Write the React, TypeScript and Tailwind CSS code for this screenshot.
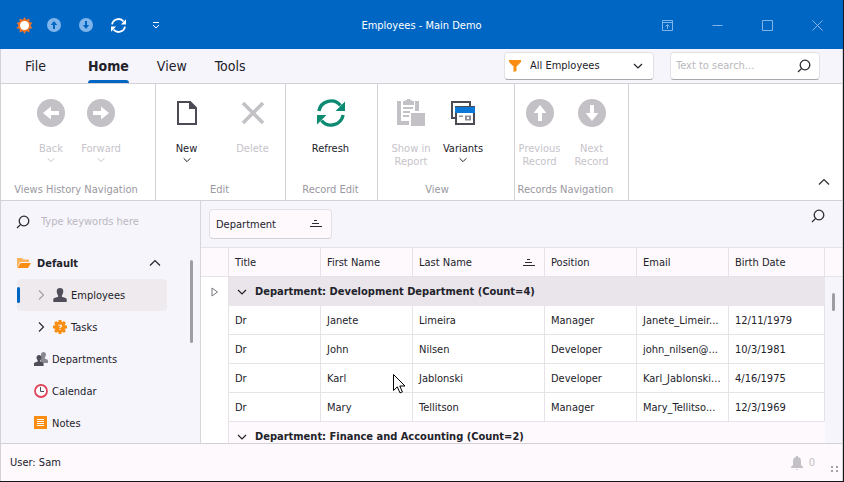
import type { ReactNode } from "react";

function Chevron({ dir, size = 12, className = "" }: { dir: "up" | "down" | "right"; size?: number; className?: string }) {
  const d = dir === "up" ? "M1 8.5 6 3.5l5 5" : dir === "down" ? "M2 4l4 4 4-4" : "M4 1.5 8.5 6 4 10.5";
  return (
    <svg width={size} height={size} viewBox="0 0 12 12" fill="none" stroke="currentColor" strokeWidth="1.2" className={className} aria-hidden="true">
      <path d={d} />
    </svg>
  );
}

function SearchIcon() {
  return (
    <svg width="14" height="14" viewBox="0 0 14 14" fill="none" stroke="#2b2b33" strokeWidth="1.3" aria-hidden="true">
      <circle cx="8" cy="6" r="4.8" />
      <path d="M4.7 9.4 1 13" />
    </svg>
  );
}

function SortIcon() {
  return (
    <svg width="12" height="8" viewBox="0 0 12 8" stroke="#2b2b33" strokeWidth="1" aria-hidden="true">
      <path d="M4 .5h3M2 3.5h7M0 6.5h12" />
    </svg>
  );
}

function ArrowDisc({ rotate, size, disc, arrow }: { rotate: 0 | 90 | 180 | 270; size: number; disc: string; arrow: string }) {
  return (
    <svg width={size} height={size} viewBox="0 0 28 28" aria-hidden="true">
      <circle cx="14" cy="14" r="14" fill={disc} />
      <path transform={`rotate(${rotate} 14 14)`} d="M14 6l6.4 8h-4.400v8h-4v-8H7.600z" fill={arrow} />
    </svg>
  );
}

function RefreshIcon({ size, color }: { size: number; color: string }) {
  return (
    <svg width={size} height={size} viewBox="0 0 28 28" aria-hidden="true">
      <g fill="none" stroke={color} strokeWidth="3.4">
        <path d="M1.900 12A12.300 12.300 0 0 1 23.500 6.500" />
        <path d="M26.100 16A12.300 12.300 0 0 1 4.500 21.500" />
      </g>
      <path d="M28 2.500v9.500H18.500zM0 25.500V16h9.500z" fill={color} />
    </svg>
  );
}

function SunIcon() {
  const rays = Array.from({ length: 10 }, (_, i) => i * 36);
  return (
    <svg width="17" height="17" viewBox="0 0 18 18" aria-hidden="true">
      {rays.map((a) => (
        <path key={a} d="M9 0l3 5H6z" fill="#f07427" transform={`rotate(${a} 9 9)`} />
      ))}
      <circle cx="9" cy="9" r="6.200" fill="#f07427" />
      <circle cx="9" cy="9" r="4.800" fill="#fff" />
    </svg>
  );
}

function NewIcon() {
  return (
    <svg width="28" height="28" viewBox="0 0 28 28" aria-hidden="true">
      <path d="M5 3h11.500l6.500 6.500V25H5z" fill="none" stroke="#4c4b55" strokeWidth="2" />
      <path d="M16 2h1.500L24 8.500V10h-8z" fill="#4c4b55" />
    </svg>
  );
}

function DeleteIcon() {
  return (
    <svg width="28" height="28" viewBox="0 0 28 28" stroke="#c3c0c6" strokeWidth="3.6" aria-hidden="true">
      <path d="M4 4l20 20M24 4 4 24" />
    </svg>
  );
}

function ReportIcon() {
  return (
    <svg width="28" height="28" viewBox="0 0 28 28" fill="#c3c0c6" aria-hidden="true">
      <path d="M0 2h4v20h8v4H0zM18 2h4v10h-4zM6 2h2.500V1H10V0h3v1h1.500v1H17v4H6z" />
      <path d="M6 8h10v2H6zM6 12h7v2H6zM6 16h6v2H6zM14 14h14v13H14z" />
    </svg>
  );
}

function VariantsIcon() {
  return (
    <svg width="28" height="28" viewBox="0 0 28 28" aria-hidden="true">
      <path d="M6 19H3V3h18v5" fill="none" stroke="#4c4b55" strokeWidth="2" />
      <path d="M7 8h18v17H7z" fill="#fff" stroke="#4c4b55" strokeWidth="2" />
      <path d="M6 8h20v6H6z" fill="#0a78d6" />
      <path d="M10 16.500h4v1.500h-4zM16 16.500h6v5h-6z" fill="#8f8e97" />
      <path d="M18 18h2v2h-2z" fill="#fff" />
    </svg>
  );
}

const label = "text-[11px] leading-[13px]";

function RibbonButton({ icon, text, enabled, menu, width }: { icon: ReactNode; text: string; enabled?: boolean; menu?: boolean; width: string }) {
  return (
    <button
      type="button"
      disabled={!enabled}
      className={`${width} ${label} flex shrink-0 flex-col items-center pt-[15px] text-center ${enabled ? "text-[#22222a]" : "text-[#c6c3ca]"}`}
    >
      <span className="mb-[15px] flex h-7">{icon}</span>
      <span>{text}</span>
      {menu && <Chevron dir="down" size={10} />}
    </button>
  );
}

function RibbonGroup({ title, width, children }: { title: string; width: string; children: ReactNode }) {
  return (
    <section aria-label={title} className={`${width} flex shrink-0 flex-col border-r border-[#d3d0d6]`}>
      <div className="flex flex-1 justify-center">{children}</div>
      <h2 className={`${label} pb-1 text-center whitespace-nowrap text-[#9a989f]`}>{title}</h2>
    </section>
  );
}

function Ribbon() {
  const disc = "#c3c0c6";
  return (
    <div className="flex h-[118px] shrink-0 border-y border-[#d3d0d6] bg-white">
      <RibbonGroup title="Views History Navigation" width="w-[155px] pr-1">
        <RibbonButton width="w-[50px]" icon={<ArrowDisc size={28} rotate={270} disc={disc} arrow="#fff" />} text="Back" menu />
        <RibbonButton width="w-[50px]" icon={<ArrowDisc size={28} rotate={90} disc={disc} arrow="#fff" />} text="Forward" menu />
      </RibbonGroup>
      <RibbonGroup title="Edit" width="w-[130px] pr-0.5">
        <RibbonButton width="w-[66px]" icon={<NewIcon />} text="New" enabled menu />
        <div className="mt-1.5 mb-2.5 w-px bg-[#d3d0d6]" />
        <RibbonButton width="w-[66px]" icon={<DeleteIcon />} text="Delete" />
      </RibbonGroup>
      <RibbonGroup title="Record Edit" width="w-[92px] pr-0.5">
        <RibbonButton width="w-[66px]" icon={<RefreshIcon size={28} color="#0d8a72" />} text="Refresh" enabled />
      </RibbonGroup>
      <RibbonGroup title="View" width="w-[137px] pr-[18px]">
        <RibbonButton width="w-[52px]" icon={<ReportIcon />} text="Show in Report" />
        <RibbonButton width="w-[52px]" icon={<VariantsIcon />} text="Variants" enabled menu />
      </RibbonGroup>
      <RibbonGroup title="Records Navigation" width="w-[114px] pr-3">
        <RibbonButton width="w-[52px]" icon={<ArrowDisc size={28} rotate={0} disc={disc} arrow="#fff" />} text="Previous Record" />
        <RibbonButton width="w-[52px]" icon={<ArrowDisc size={28} rotate={180} disc={disc} arrow="#fff" />} text="Next Record" />
      </RibbonGroup>
      <button type="button" aria-label="Collapse ribbon" className="mt-auto mr-3 mb-3 ml-auto text-[#2b2b33]">
        <Chevron dir="up" />
      </button>
    </div>
  );
}

function TitleBar() {
  return (
    <header className="grid h-[49px] shrink-0 grid-cols-[1fr_auto_1fr] items-center bg-[#0066c4] pt-px text-[#7fb5ea]">
      <div className="flex items-center pl-4">
        <SunIcon />
        <div className="ml-3.5 flex items-center gap-[18px]">
          <button type="button" aria-label="Previous">
            <ArrowDisc size={14} rotate={0} disc="#7fb5ea" arrow="#0066c4" />
          </button>
          <button type="button" aria-label="Next">
            <ArrowDisc size={14} rotate={180} disc="#7fb5ea" arrow="#0066c4" />
          </button>
          <button type="button" aria-label="Refresh">
            <RefreshIcon size={15} color="#fff" />
          </button>
          <button type="button" aria-label="Customize toolbar" className="ml-2">
            <svg width="8" height="8" viewBox="0 0 8 8" fill="none" stroke="#fff">
              <path d="M1 1.500h6M1 4l3 3 3-3" />
            </svg>
          </button>
        </div>
      </div>
      <h1 className="pt-0.5 text-[11px] text-white">Employees - Main Demo</h1>
      <div className="flex items-center justify-end gap-[39px] pr-5">
        <button type="button" aria-label="Ribbon display options">
          <svg width="11" height="11" viewBox="0 0 11 11" fill="none" stroke="currentColor">
            <path d="M.5.500h10v10H.5zM.5 2.500h10M5.500 9V5M3.500 6.500l2-2 2 2" />
          </svg>
        </button>
        <button type="button" aria-label="Minimize">
          <svg width="11" height="11" viewBox="0 0 11 11" stroke="currentColor">
            <path d="M.5 5.500h10" />
          </svg>
        </button>
        <button type="button" aria-label="Maximize">
          <svg width="11" height="11" viewBox="0 0 11 11" fill="none" stroke="currentColor">
            <path d="M.5.500h10v10H.5z" />
          </svg>
        </button>
        <button type="button" aria-label="Close">
          <svg width="11" height="11" viewBox="0 0 11 11" stroke="currentColor">
            <path d="M.5.500l10 10M10.500.500l-10 10" />
          </svg>
        </button>
      </div>
    </header>
  );
}

const field = "flex h-7 w-[150px] items-center rounded border border-[#e4e1e6] border-b-[#a9a7ad] bg-white";

function TabBar() {
  return (
    <div className="flex h-[34px] shrink-0 items-center pr-[22px]">
      <nav className="flex h-full flex-1 text-sm">
        <button type="button" className="ml-6">File</button>
        <button type="button" className="relative ml-[42px] font-bold">
          Home
          <span className="absolute right-0 bottom-0 left-0 h-[3px] rounded-t-sm bg-[#0066c4]" />
        </button>
        <button type="button" className="ml-7">View</button>
        <button type="button" className="ml-7">Tools</button>
      </nav>
      <div className={`${field} relative`}>
        <svg width="12" height="12" viewBox="0 0 12 12" fill="#f98e13" className="absolute left-1" aria-hidden="true">
          <path d="M0 0h12v2L7.500 6.500V11l-3 1V6.500L0 2z" />
        </svg>
        <select aria-label="Filter" className="h-full w-full appearance-none bg-transparent pl-[25px] text-[11px] outline-none">
          <option>All Employees</option>
        </select>
        <Chevron dir="down" className="pointer-events-none absolute right-[9px]" />
      </div>
      <div className={`${field} ml-4 pr-2`}>
        <input
          type="search"
          aria-label="Text to search"
          placeholder="Text to search..."
          className="min-w-0 flex-1 bg-transparent pl-[5px] text-[11px] outline-none placeholder:text-[#bab8be]"
        />
        <SearchIcon />
      </div>
    </div>
  );
}

function FolderIcon() {
  return (
    <svg width="14" height="12" viewBox="0 0 14 12" aria-hidden="true">
      <path d="M0 1h5l1.500 1.500H12V5H3L0 11z" fill="#fbb258" />
      <path d="M3.500 6H14l-3 5H.500z" fill="#f98e13" />
    </svg>
  );
}

function PersonIcon() {
  return (
    <svg width="14" height="14" viewBox="0 0 14 14" fill="#504f59" aria-hidden="true">
      <path d="M7 0c2 0 3.300 1.200 3.300 3.200S9 7.500 8.800 7.700v1l3.800 1.300c.8.300 1.100.8 1.100 1.600V14H.3v-2.400c0-.8.300-1.300 1.100-1.600l3.800-1.300v-1C5 7.500 3.700 5.200 3.700 3.200S5 0 7 0z" />
    </svg>
  );
}

function PeopleIcon() {
  return (
    <svg width="14" height="14" viewBox="0 0 14 14" aria-hidden="true">
      <path d="M9.500 0c1.500 0 2.500 1 2.500 2.400 0 1.500-1 3-1.200 3.200v1l2.400 1c.5.200.8.600.8 1.200V11H7V2c.3-1.200 1.300-2 2.500-2z" fill="#8a8992" />
      <path d="M5 3c1.500 0 2.500 1 2.500 2.400 0 1.500-1 2.900-1.200 3.100v1l2.500 1c.5.200.8.600.8 1.200V14H0v-2.300c0-.6.300-1 .8-1.200l2.900-1v-1C3.500 8.300 2.500 6.900 2.500 5.400 2.500 4 3.500 3 5 3z" fill="#504f59" />
    </svg>
  );
}

function TaskIcon() {
  return (
    <svg width="14" height="14" viewBox="0 0 14 14" aria-hidden="true">
      <g fill="#f98e13">
        {[0, 45, 90, 135].map((a) => (
          <rect key={a} x="5.500" y="0" width="3" height="14" transform={`rotate(${a} 7 7)`} />
        ))}
        <circle cx="7" cy="7" r="5.500" />
      </g>
      <path d="M5.500 5.200h3v1.600H7v1.400M7 9v1" fill="none" stroke="#fff" />
    </svg>
  );
}

function ClockIcon() {
  return (
    <svg width="14" height="14" viewBox="0 0 14 14" fill="none" aria-hidden="true">
      <circle cx="7" cy="7" r="6" fill="#fff" stroke="#e0455b" strokeWidth="1.800" />
      <path d="M6.500 3v4.500H10" stroke="#504f59" />
    </svg>
  );
}

function NotesIcon() {
  return (
    <svg width="14" height="14" viewBox="0 0 14 14" aria-hidden="true">
      <rect width="13" height="13" fill="#f98e13" />
      <path d="M3 3.500h7M3 5.500h7M3 7.500h7M3 9.500h7" stroke="#fff" />
    </svg>
  );
}

function NavItem({ icon, text, expand, selected }: { icon: ReactNode; text: string; expand?: "dim" | "on"; selected?: boolean }) {
  return (
    <li>
      <button
        type="button"
        className={`relative flex h-8 w-[150px] items-center rounded text-[11px] ${expand ? "pl-[18px]" : "pl-[17px]"} ${selected ? "bg-[#eeeaed]" : ""}`}
      >
        {selected && <span className="absolute top-2 left-0 h-4 w-[3px] rounded-sm bg-[#0066c4]" />}
        {expand && <Chevron dir="right" className={expand === "dim" ? "mr-1.5 text-[#a5a3aa]" : "mr-1.5 text-[#2b2b33]"} />}
        <span className="mr-1">{icon}</span>
        <span className="pt-0.5">{text}</span>
      </button>
    </li>
  );
}

function Sidebar() {
  return (
    <aside className="flex w-[200px] shrink-0 flex-col border-r border-[#d8d5db]">
      <div className="flex items-center gap-[11px] pt-[13px] pl-[15px]">
        <SearchIcon />
        <input
          type="search"
          aria-label="Type keywords here"
          placeholder="Type keywords here"
          className="h-4 w-36 bg-transparent text-[11px] outline-none placeholder:text-[#bab8be]"
        />
      </div>
      <div className="mt-[17px] flex min-h-0 flex-1 overflow-hidden">
        <div className="flex-1 pl-4">
          <div className="flex h-8 w-[150px] items-center">
            <FolderIcon />
            <span className="ml-[6px] flex-1 pt-0.5 text-[11px] font-bold">Default</span>
            <button type="button" aria-label="Collapse Default" className="mr-1.5">
              <Chevron dir="up" />
            </button>
          </div>
          <ul>
            <NavItem icon={<PersonIcon />} text="Employees" expand="dim" selected />
            <NavItem icon={<TaskIcon />} text="Tasks" expand="on" />
            <NavItem icon={<PeopleIcon />} text="Departments" />
            <NavItem icon={<ClockIcon />} text="Calendar" />
            <NavItem icon={<NotesIcon />} text="Notes" />
          </ul>
        </div>
        <div className="mt-[13px] mr-[7px] h-[83px] w-[3px] rounded bg-[#9f9da3]" />
      </div>
    </aside>
  );
}

const rows = [
  ["Dr", "Janete", "Limeira", "Manager", "Janete_Limeir...", "12/11/1979"],
  ["Dr", "John", "Nilsen", "Developer", "john_nilsen@...", "10/3/1981"],
  ["Dr", "Karl", "Jablonski", "Developer", "Karl_Jablonski...", "4/16/1975"],
  ["Dr", "Mary", "Tellitson", "Manager", "Mary_Tellitso...", "12/3/1969"],
];

function GroupRow({ text, active }: { text: string; active?: boolean }) {
  return (
    <tr className="h-[29px]">
      <td className="border-r border-[#e6e2e8] bg-white">
        {active && (
          <svg width="8" height="10" viewBox="0 0 8 10" fill="none" stroke="#77757d" className="mx-auto" aria-hidden="true">
            <path d="M1 1v8l5.500-4z" />
          </svg>
        )}
      </td>
      <th colSpan={6} scope="rowgroup" className={`text-left ${active ? "bg-[#e9e5ea]" : "bg-[#fdf9fc]"}`}>
        <button type="button" className="flex items-center gap-[7px] pl-[7px] font-bold">
          <Chevron dir="down" />
          {text}
        </button>
      </th>
    </tr>
  );
}

function EmployeeGrid() {
  const cell = "whitespace-nowrap border-r border-b border-[#e6e2e8] pt-0.5 pl-[6px]";
  const head = "border-y border-r border-[#e6e2e8] pt-0.5 px-[6px] text-left font-normal";
  return (
    <main className="flex min-w-0 flex-1 flex-col overflow-hidden">
      <div className="flex h-[46px] shrink-0 items-start justify-between pt-2 pr-[17px] pl-2">
        <button type="button" className="flex h-[30px] w-[123px] items-center justify-between rounded border border-[#e4e1e6] border-b-[#d3d0d6] bg-[#fdf9fc] pr-[9px] pl-[6px] text-[11px]">
          <span className="pt-0.5">Department</span>
          <SortIcon />
        </button>
        <button type="button" aria-label="Search records">
          <SearchIcon />
        </button>
      </div>
      <div className="flex min-h-0 flex-1 overflow-hidden">
        <div className="min-w-0 flex-1">
          <table className="w-full table-fixed border-separate border-spacing-0 text-[11px] leading-[14px]">
            <colgroup>
              <col className="w-7" />
              <col className="w-[92px]" />
              <col className="w-[92px]" />
              <col className="w-[132px]" />
              <col className="w-[92px]" />
              <col className="w-[92px]" />
              <col />
            </colgroup>
            <thead>
              <tr className="h-[30px] bg-[#fdf9fc]">
                <td className={head} />
                <th scope="col" className={head}>Title</th>
                <th scope="col" className={head}>First Name</th>
                <th scope="col" className={head}>
                  <span className="flex items-center justify-between pr-[3px]">
                    Last Name
                    <SortIcon />
                  </span>
                </th>
                <th scope="col" className={head}>Position</th>
                <th scope="col" className={head}>Email</th>
                <th scope="col" className={head}>Birth Date</th>
              </tr>
            </thead>
            <tbody>
              <GroupRow text="Department: Development Department (Count=4)" active />
              {rows.map((row) => (
                <tr key={row[1]} className="h-[29px] bg-white">
                  <td className="border-r border-[#e6e2e8]" />
                  {row.map((value, i) => (
                    <td key={i} className={cell}>{value}</td>
                  ))}
                </tr>
              ))}
              <GroupRow text="Department: Finance and Accounting (Count=2)" />
            </tbody>
          </table>
        </div>
        <div className="w-[17px] shrink-0">
          <div className="h-[30px] border-y border-[#e6e2e8] bg-[#fdf9fc]" />
          <div className="mt-4 ml-[7px] h-[18px] w-[3px] rounded bg-[#9f9da3]" />
        </div>
      </div>
    </main>
  );
}

function StatusBar() {
  return (
    <footer className="flex h-[38px] shrink-0 items-center border-t border-[#d3d0d6] bg-[#fdf9fc] pl-[9px] text-[11px]">
      <span className="flex-1 pt-0.5">User: Sam</span>
      <svg width="12" height="14" viewBox="0 0 12 14" fill="#c3c0c6" aria-hidden="true">
        <path d="M5 0h2v1c2 .5 3 2 3 4v4l2 2v1H0v-1l2-2V5c0-2 1-3.500 3-4zM4.500 13h3L6 14z" />
      </svg>
      <span className="ml-[6px] pt-0.5 text-[#c3c0c6]">0</span>
      <svg width="8" height="8" viewBox="0 0 8 8" fill="#a5a3aa" className="mt-3 mr-[3px] ml-4" aria-hidden="true">
        <path d="M0 1h2v2H0zM5 1h2v2H5zM0 5h2v2H0zM5 5h2v2H5z" />
      </svg>
    </footer>
  );
}

export default function App() {
  return (
    <div className="relative flex h-screen flex-col overflow-hidden border-r border-b border-[#17171b] bg-[#f7f5fc] font-['DejaVu_Sans_Condensed','Noto_Sans',sans-serif] text-[#22222a]">
      <TitleBar />
      <div className="flex min-h-0 flex-1 flex-col border-x border-[#d3d0d6]">
        <TabBar />
        <Ribbon />
        <div className="flex min-h-0 flex-1">
          <Sidebar />
          <EmployeeGrid />
        </div>
        <StatusBar />
      </div>
      <svg width="13" height="20" viewBox="0 0 13 20" className="pointer-events-none absolute top-[374px] left-[393px]" aria-hidden="true">
        <path d="M.5.500v16l3.800-3.600 2.700 6 2.400-1-2.600-5.900H12z" fill="#fff" stroke="#000" />
      </svg>
    </div>
  );
}
